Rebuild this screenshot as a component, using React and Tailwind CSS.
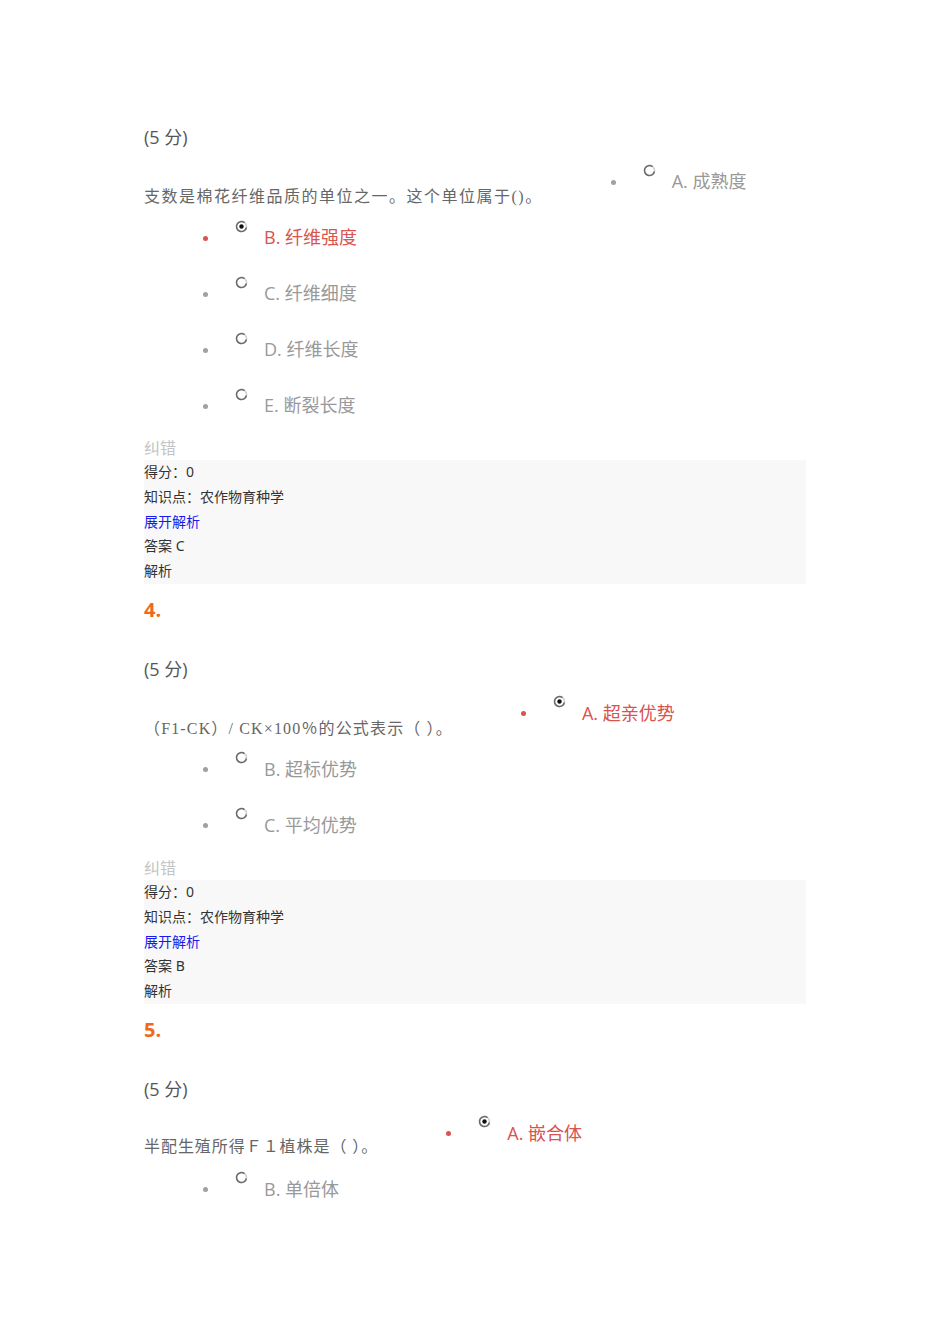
import React from "react";

const sans = { fontFamily: '"Open Sans", "Noto Sans CJK SC", sans-serif' };
const serif = { fontFamily: '"Liberation Serif", "Noto Sans CJK SC", serif' };

function Radio({ checked }) {
  return (
    <svg width="13" height="13" viewBox="0 0 13 13" className="shrink-0">
      <circle cx="6.5" cy="6.5" r="5" fill="#fff" stroke="#d0d0d0" strokeWidth="1.6" />
      <path d="M9.5 2.6 A5 5 0 1 0 11.4 7.5" fill="none" stroke="#6b6b6b" strokeWidth="1.5" />
      {checked && <circle cx="6.5" cy="6.5" r="2.2" fill="#111" />}
    </svg>
  );
}

function Option({ label, checked }) {
  const color = checked ? "text-[#d9534f]" : "text-[#999999]";
  const dot = checked ? "bg-[#d9534f]" : "bg-[#a0a0a0]";
  return (
    <li className="flex items-center h-[56px]">
      <span className={`w-[5px] h-[5px] rounded-full ${dot} shrink-0 mt-[2px]`} />
      <span className="ml-[27px] mb-[22px] flex">
        <Radio checked={checked} />
      </span>
      <span className={`ml-[16px] text-[18px] leading-[24px] ${color}`} style={sans}>
        {label}
      </span>
    </li>
  );
}

function Header({ num }) {
  return (
    <>
      {num && (
        <div className="mt-[12px] h-[28px] text-[20px] leading-[28px] font-bold text-[#f0691b]" style={sans}>
          {num}.
        </div>
      )}
      <div
        className={`${num ? "mt-[33px]" : ""} text-[18px] leading-[24px] text-[#555555]`}
        style={sans}
      >
        (5 分)
      </div>
    </>
  );
}

function Question({ num, text, options, answer, textTop = "mt-[32px]", track = "tracking-[1.5px]" }) {
  const [first, ...rest] = options;
  return (
    <div>
      <Header num={num} />
      <div className="mt-[4px] flex items-start">
        <div
          className={`${textTop} ${track} text-[16px] leading-[24px] text-[#666666] whitespace-nowrap`}
          style={serif}
        >
          {text}
        </div>
        <ul className="ml-[68px]">
          <Option label={first.label} checked={first.checked} />
        </ul>
      </div>
      <ul className="pl-[59px]">
        {rest.map((o, i) => (
          <Option key={i} label={o.label} checked={o.checked} />
        ))}
      </ul>
      {answer && (
        <>
          <div className="mt-[3px] text-[16px] leading-[24px] text-[#c4c4c4]" style={sans}>
            纠错
          </div>
          <div
            className="w-[662px] bg-[#f8f8f8] text-[14px] leading-[24.8px] text-[#333333]"
            style={{ fontFamily: '"Noto Sans", "Noto Sans CJK SC", sans-serif' }}
          >
            <div>得分：0</div>
            <div>知识点：农作物育种学</div>
            <div className="text-[#1a1aee]">展开解析</div>
            <div>答案 {answer}</div>
            <div>解析</div>
          </div>
        </>
      )}
    </div>
  );
}

export default function App() {
  return (
    <div className="w-[950px] h-[1344px] bg-white overflow-hidden">
      <div className="pl-[144px] pt-[125px]">
        <Question
          text="支数是棉花纤维品质的单位之一。这个单位属于()。"
          options={[
            { label: "A. 成熟度" },
            { label: "B. 纤维强度", checked: true },
            { label: "C. 纤维细度" },
            { label: "D. 纤维长度" },
            { label: "E. 断裂长度" },
          ]}
          answer="C"
        />
        <Question
          num="4"
          track="tracking-[1.15px]"
          text="（F1-CK）/ CK×100％的公式表示（ ）。"
          options={[
            { label: "A. 超亲优势", checked: true },
            { label: "B. 超标优势" },
            { label: "C. 平均优势" },
          ]}
          answer="B"
        />
        <Question
          num="5"
          textTop="mt-[30px]"
          track="tracking-[0.95px]"
          text="半配生殖所得Ｆ１植株是（ ）。"
          options={[
            { label: "A. 嵌合体", checked: true },
            { label: "B. 单倍体" },
          ]}
        />
      </div>
    </div>
  );
}
